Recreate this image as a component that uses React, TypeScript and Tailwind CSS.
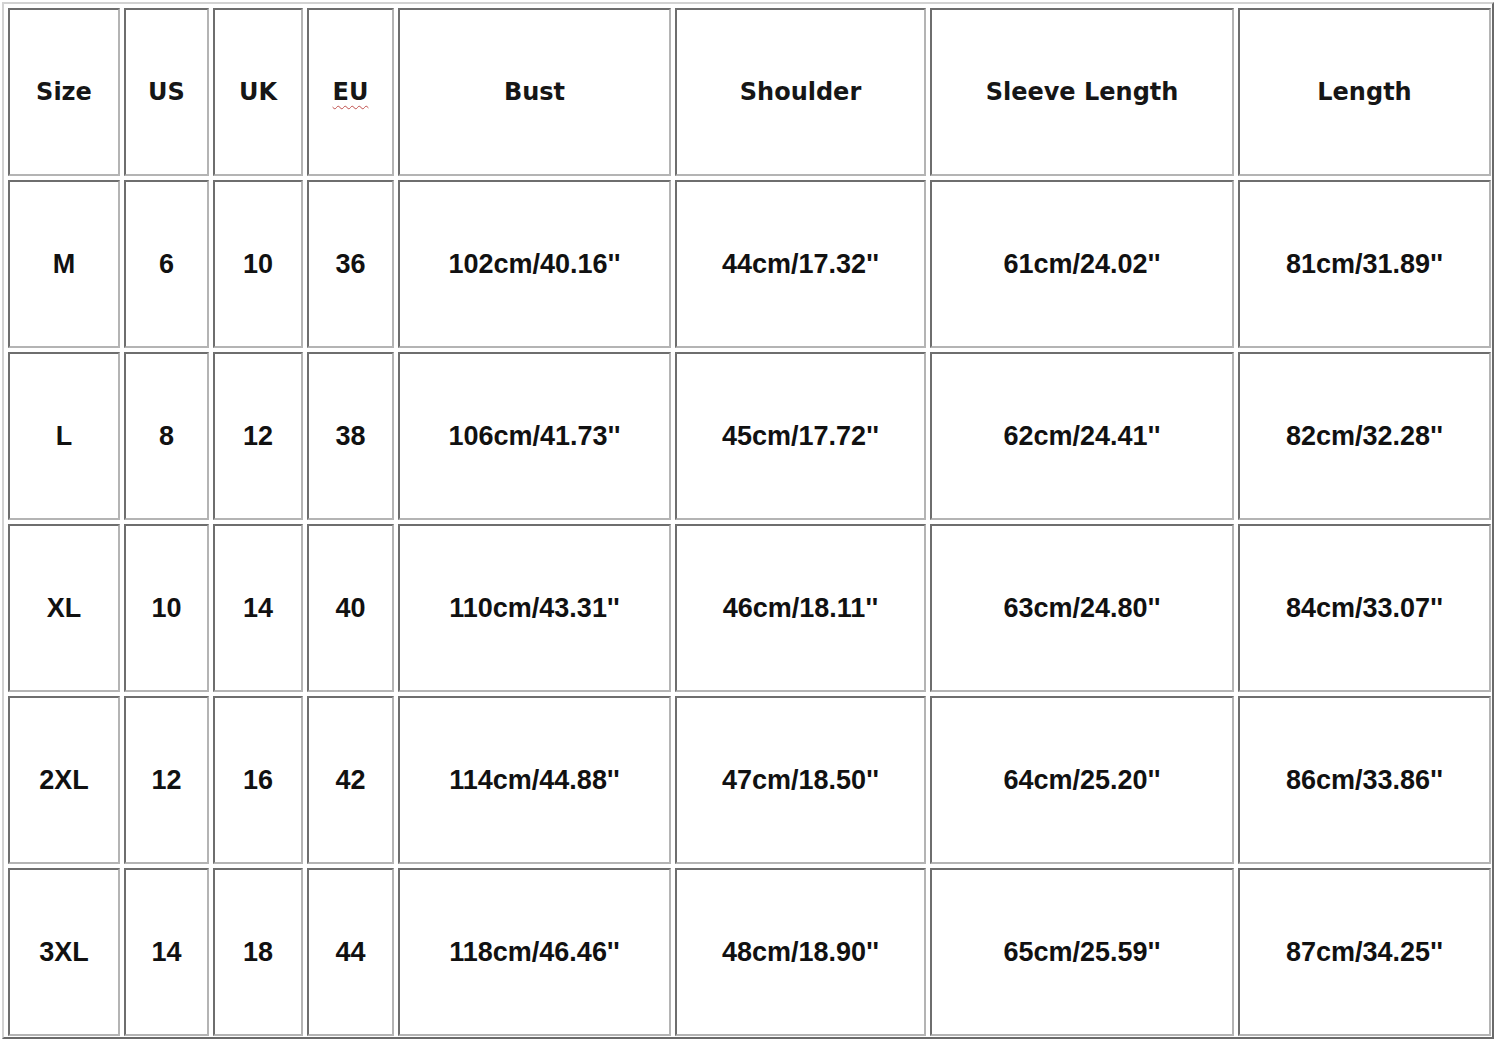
const headers = ["Size", "US", "UK", "EU", "Bust", "Shoulder", "Sleeve Length", "Length"]

const rows = [
  ["M", "6", "10", "36", "102cm/40.16''", "44cm/17.32''", "61cm/24.02''", "81cm/31.89''"],
  ["L", "8", "12", "38", "106cm/41.73''", "45cm/17.72''", "62cm/24.41''", "82cm/32.28''"],
  ["XL", "10", "14", "40", "110cm/43.31''", "46cm/18.11''", "63cm/24.80''", "84cm/33.07''"],
  ["2XL", "12", "16", "42", "114cm/44.88''", "47cm/18.50''", "64cm/25.20''", "86cm/33.86''"],
  ["3XL", "14", "18", "44", "118cm/46.46''", "48cm/18.90''", "65cm/25.59''", "87cm/34.25''"],
]

const cell =
  "flex items-center justify-center border-2 border-t-[#6e6e6e] border-l-[#6e6e6e] border-b-[#b4b4b4] border-r-[#b4b4b4] bg-white"

export default function App() {
  return (
    <div className="w-[1500px] h-[1044px] bg-white pt-[2px] pl-[2px]">
      <div className="inline-block border-2 border-t-[#d2d2d2] border-l-[#d2d2d2] border-b-[#6a6a6a] border-r-[#6a6a6a] pt-[4px] pl-[4px] pr-[1px] pb-[1px]">
        <div className="grid grid-cols-[112px_85px_90px_87px_273px_251px_304px_253px] auto-rows-[168px] gap-[4px]">
          {headers.map((h) => (
            <div key={h} className={cell}>
              <span
                className={
                  "font-['DejaVu_Sans',sans-serif] font-bold text-[24px] text-[#161616] " +
                  (h === "EU" ? "underline decoration-wavy decoration-[#c0504d] decoration-1 underline-offset-[5px]" : "")
                }
              >
                {h}
              </span>
            </div>
          ))}
          {rows.map((r) =>
            r.map((v, i) => (
              <div key={r[0] + i} className={cell}>
                <span className="font-['Liberation_Sans',Arial,sans-serif] font-bold text-[27px] text-[#111]">
                  {v}
                </span>
              </div>
            ))
          )}
        </div>
      </div>
    </div>
  )
}
